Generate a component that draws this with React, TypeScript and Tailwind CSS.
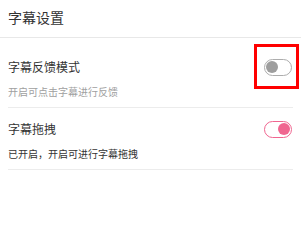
import React from "react";

function Toggle({ on }: { on: boolean }) {
  return on ? (
    <div className="w-[28px] h-[17px] rounded-full border-[1.5px] border-[#f06690] bg-white flex items-center justify-end px-[1px] shrink-0">
      <div className="w-[12px] h-[12px] rounded-full bg-[#f06690]" />
    </div>
  ) : (
    <div className="w-[28px] h-[17px] rounded-full border-[1.5px] border-[#adadad] bg-white flex items-center justify-start px-[1px] shrink-0">
      <div className="w-[12px] h-[12px] rounded-full bg-[#9e9e9e]" />
    </div>
  );
}

export default function App() {
  return (
    <div
      className="relative w-[301px] h-[243px] bg-white text-[#333]"
      style={{ fontFamily: '"Noto Sans CJK SC", "Noto Sans", sans-serif' }}
    >
      <div className="h-[38px] border-b border-[#e8e8e8] pl-2 pt-[7px] text-[14px] leading-[20px]">
        字幕设置
      </div>
      <div className="px-2">
        <div className="pt-[21px] pb-[8px] border-b border-[#ececec]">
          <div className="flex items-center justify-between h-[16px] pr-[1px]">
            <span className="text-[12px] leading-[16px]">字幕反馈模式</span>
            <Toggle on={false} />
          </div>
          <div className="mt-[10px] text-[10px] leading-[14px] text-[#a0a0a0]">
            开启可点击字幕进行反馈
          </div>
        </div>
        <div className="pt-[13px] pb-[8px] border-b border-[#ececec]">
          <div className="flex items-center justify-between h-[16px] pr-[1px]">
            <span className="text-[12px] leading-[16px]">字幕拖拽</span>
            <Toggle on={true} />
          </div>
          <div className="mt-[10px] text-[10px] leading-[14px] text-[#333]">
            已开启，开启可进行字幕拖拽
          </div>
        </div>
      </div>
      <div className="absolute left-[254px] top-[44px] w-[45px] h-[45px] border-[3px] border-[#ff0000]" />
    </div>
  );
}
